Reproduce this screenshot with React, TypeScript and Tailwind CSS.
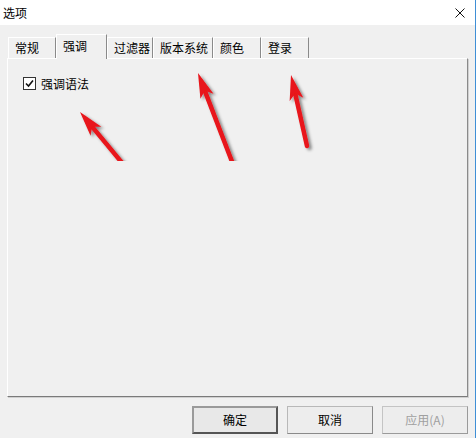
import React from 'react';

const font = { fontFamily: '"Noto Sans CJK SC", "Microsoft YaHei", sans-serif' };

type Tab = { label: string; width: string };

const tabs: Tab[] = [
    { label: '常规', width: 'w-[48px]' },
    { label: '强调', width: 'w-[51px]' },
    { label: '过滤器', width: 'w-[46px]' },
    { label: '版本系统', width: 'w-[60px]' },
    { label: '颜色', width: 'w-[48px]' },
    { label: '登录', width: 'w-[48px]' },
];

// red annotation arrows drawn over the dialog
const arrows = [
    { tip: [80, 112], tail: [128, 170] },
    { tip: [198, 73], tail: [236, 172] },
    { tip: [291, 75], tail: [307, 146] },
];

function Arrow({ tip, tail }: { tip: number[]; tail: number[] }) {
    const dx = tail[0] - tip[0];
    const dy = tail[1] - tip[1];
    const len = Math.hypot(dx, dy);
    const ux = dx / len;
    const uy = dy / len;
    const nx = -uy;
    const ny = ux;
    const L = 25;
    const W = 7;
    const p = (d: number, s: number) =>
        `${tip[0] + ux * d + nx * s},${tip[1] + uy * d + ny * s}`;
    const head = [p(0, 0), p(L, W), p(L - 6, 0), p(L, -W)].join(' ');
    return (
        <g>
            <line
                x1={tip[0] + ux * (L - 8)}
                y1={tip[1] + uy * (L - 8)}
                x2={tail[0]}
                y2={tail[1]}
                stroke="#e8141a"
                strokeWidth={4.5}
                strokeLinecap="round"
            />
            <polygon points={head} fill="#e8141a" />
        </g>
    );
}

export default function App() {
    return (
        <div
            className="relative w-[476px] h-[438px] overflow-hidden bg-[#f0f0f0] border-r border-[#3f8fd6] text-[12px] text-black"
            style={font}
        >
            {/* Title bar */}
            <div className="h-[25px] bg-white flex items-center justify-between pl-[3px] pr-[10px]">
                <span>选项</span>
                <svg width="10" height="10" viewBox="0 0 10 10">
                    <path d="M0.5 0.5 L9.5 9.5 M9.5 0.5 L0.5 9.5" stroke="#111" strokeWidth="1" />
                </svg>
            </div>

            <div className="px-[7px] pt-[9px]">
                {/* Tab strip */}
                <div className="flex items-end h-[24px] pl-[1px]">
                    {tabs.map((tab, i) =>
                        i === 1 ? (
                            <div
                                key={tab.label}
                                className={`${tab.width} relative z-10 -mb-px h-[25px] pl-[6px] pb-[3px] flex items-center bg-[#f0f0f0] border-l border-t border-white border-r border-r-[#8a8a8a]`}
                            >
                                {tab.label}
                            </div>
                        ) : (
                            <div
                                key={tab.label}
                                className={`${tab.width} h-[21px] pl-[6px] flex items-center border-l border-t border-white border-r border-r-[#8a8a8a]`}
                            >
                                {tab.label}
                            </div>
                        )
                    )}
                </div>

                {/* Tab panel */}
                <div className="h-[339px] border-t border-l border-white border-r border-b border-r-[#8a8a8a] border-b-[#7a7a7a] shadow-[1px_1px_0_#d0d0d0] pt-[18px] pl-[15px]">
                    <label className="flex items-center gap-[5px] leading-[13px]">
                        <span className="w-[13px] h-[13px] bg-white border border-[#333] flex items-center justify-center">
                            <svg width="9" height="9" viewBox="0 0 9 9">
                                <polyline points="1,4.5 3.5,7 8,1.5" fill="none" stroke="#111" strokeWidth="1.6" />
                            </svg>
                        </span>
                        <span>强调语法</span>
                    </label>
                </div>

                {/* Buttons */}
                <div className="flex justify-end gap-[9px] mt-[9px]">
                    <button className="w-[86px] h-[28px] bg-[#e8e8e8] border-2 border-t-[#9a9a9a] border-l-[#9a9a9a] border-r-[#555] border-b-[#555]">
                        确定
                    </button>
                    <button className="w-[86px] h-[28px] bg-[#ededed] border border-[#b8b8b8] border-r-[#8a8a8a] border-b-[#8a8a8a]">
                        取消
                    </button>
                    <button className="w-[86px] h-[28px] bg-[#ededed] text-[#a0a0a0] border border-[#c4c4c4] border-r-[#9a9a9a] border-b-[#9a9a9a]">
                        应用(A)
                    </button>
                </div>
            </div>

            {/* annotation overlay */}
            <svg className="absolute left-0 top-0 pointer-events-none" width="476" height="438">
                <defs>
                    <filter id="sh" x="-50%" y="-50%" width="200%" height="200%">
                        <feDropShadow dx="2.5" dy="2" stdDeviation="1.6" floodColor="#000" floodOpacity="0.45" />
                    </filter>
                    <clipPath id="cut">
                        <rect x="0" y="0" width="476" height="161" />
                    </clipPath>
                </defs>
                <g clipPath="url(#cut)">
                    <g filter="url(#sh)">
                        {arrows.map((a, i) => (
                            <Arrow key={i} tip={a.tip} tail={a.tail} />
                        ))}
                    </g>
                </g>
            </svg>
        </div>
    );
}
